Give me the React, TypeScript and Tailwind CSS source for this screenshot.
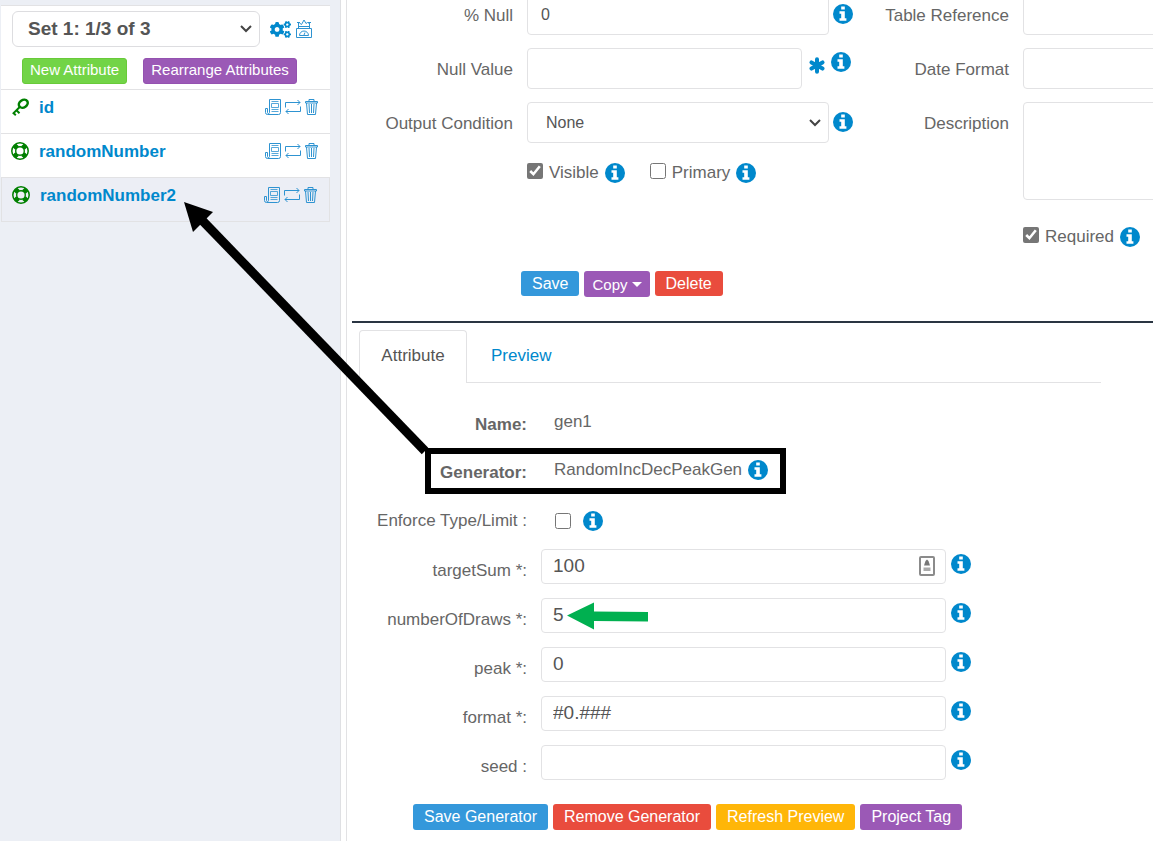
import type { ReactNode } from "react";
import { FaCogs } from "react-icons/fa";

function InfoButton() {
  return (
    <button type="button" aria-label="More information" className="block size-5 shrink-0">
      <svg viewBox="0 0 20 20" className="size-5">
        <circle cx="10" cy="10" r="10" fill="#0088cc" />
        <path d="M8.200 2.400h3.600v3H8.200zM6.500 7.200h5.300v7h1.600v2.500H6.500v-2.500h1.700V9.700H6.500z" fill="#fff" />
      </svg>
    </button>
  );
}

function AsteriskIcon() {
  return (
    <svg viewBox="0 0 16 17" className="mt-[5px] h-[17px] w-4 shrink-0" fill="none" stroke="#0088cc" strokeWidth="4" strokeLinecap="round">
      <path d="M8 2.200v12.600M2.500 5.400l11 6.200M2.500 11.600l11-6.200" />
    </svg>
  );
}

function KeyIcon() {
  return (
    <svg viewBox="0 0 18 18" className="size-[18px]" fill="none" stroke="#008000" strokeWidth="2">
      <ellipse cx="12.300" cy="5.700" rx="4.700" ry="3.700" transform="rotate(-35 12.300 5.700)" strokeWidth="2.500" />
      <path d="M9 8.700 1.800 15.900M5.200 12l3.300 3.300M2.200 14.800l2.600 2.400" />
    </svg>
  );
}

function RingIcon() {
  return (
    <svg viewBox="0 0 18 18" className="size-[18px]" fill="none" stroke="#008000">
      <circle cx="9" cy="9" r="8.200" strokeWidth="1.500" />
      <circle cx="9" cy="9" r="4.300" strokeWidth="1.400" />
      <path d="M3.200 3.200l2.900 2.900M14.800 3.200l-2.900 2.900M3.200 14.800l2.900-2.900M14.800 14.800l-2.900-2.900" strokeWidth="5" />
    </svg>
  );
}

function PaperIcon() {
  return (
    <svg viewBox="0 0 16 16" className="size-4" fill="none" stroke="#2e93d1">
      <path d="M4.500 13.500V.5h11v13a2 2 0 0 1-2 2h-11a2 2 0 0 1-2-2V9.500h2v4a1 1 0 0 0 2 0" />
      <path d="M6.500 4.500h7v4h-7zM6.500 2.500h7M6.500 10.500h7M6.500 12.500h7" strokeWidth=".8" />
    </svg>
  );
}

function RepeatIcon() {
  return (
    <svg viewBox="0 0 16 16" className="size-4" fill="none" stroke="#2e93d1">
      <path d="M.5 8.500v-5h14.500M12.500 1l2.500 2.500L12.500 6M15.500 7.500v5H1M3.500 10 1 12.500 3.500 15" />
    </svg>
  );
}

function BinIcon() {
  return (
    <svg viewBox="0 0 13 16" className="h-4 w-[13px]" fill="none" stroke="#2e93d1">
      <path d="M.5 2.500h12v1.500H.5zM4 2.500V.5h5v2M1.500 4l1 11.500h8l1-11.500M4 5l.5 9M6.500 5v9M9 5l-.5 9" />
    </svg>
  );
}

function ScaleIcon() {
  return (
    <svg viewBox="0 0 18 20" className="h-5 w-[18px]" fill="none" stroke="#2e93d1">
      <path d="M1.500 9.500h15v9h-15zM4.500 16.500a4.500 4.500 0 0 1 9 0zM9 16l1-2.500M3.500 9.500v-6M14.500 9.500v-6" />
      <path d="M3.500 7.500h11M2 3.500h3M13 3.500h3M4.500 4 6.500 5.500 9 1l2 3.500 1.500-1 1 1" />
    </svg>
  );
}

function Chevron() {
  return (
    <svg viewBox="0 0 12 8" className="pointer-events-none absolute right-2 top-1/2 h-2 w-3 -translate-y-1/2" fill="none" stroke="#444" strokeWidth="2">
      <path d="m1 1 5 5 5-5" />
    </svg>
  );
}

const field = "w-full rounded border border-[#e2e2e4] bg-white text-[#555] outline-none";

function AttributeRow({ name, icon, active }: { name: string; icon: ReactNode; active?: boolean }) {
  return (
    <li className={active ? "flex h-[45px] items-start border border-[#e2e2e4] bg-[#eceef5] pl-[10px] pr-3 pt-[7px]" : "flex h-11 items-start border-t border-[#e2e2e4] pl-[10px] pr-3 pt-[7px]"}>
      <span className="w-7 pt-[1px]">{icon}</span>
      <a href="#" className="flex-1 text-[17px] leading-[22px] font-bold text-[#0088cc]">{name}</a>
      <span className="flex items-center gap-1 pt-[2px]">
        <button type="button" aria-label={"Details of " + name}><PaperIcon /></button>
        <button type="button" aria-label={"Move " + name}><RepeatIcon /></button>
        <button type="button" aria-label={"Delete " + name}><BinIcon /></button>
      </span>
    </li>
  );
}

function Sidebar() {
  return (
    <aside className="w-[341px] shrink-0 border-r border-[#dfe0e3] bg-[#eceff5] pl-px pr-[10px] pt-[5px]">
      <div className="border-t border-[#e2e2e4] bg-white">
        <div className="flex items-center gap-[10px] pl-[11px] pr-[17px] pt-[5px]">
          <div className="relative flex-1">
            <select aria-label="Attribute set" className="h-9 w-full appearance-none rounded-md border border-[#dddde0] bg-white pl-[15px] text-[19px] font-bold text-[#555] outline-none">
              <option>Set 1: 1/3 of 3</option>
            </select>
            <Chevron />
          </div>
          <div className="flex items-center gap-1">
            <button type="button" aria-label="Settings" className="text-[#0088cc]"><FaCogs size={21} /></button>
            <button type="button" aria-label="Weights"><ScaleIcon /></button>
          </div>
        </div>
        <div className="flex gap-4 pb-[5px] pl-[21px] pt-[11px] text-[15px] leading-[22px] text-white">
          <button type="button" className="flex h-[26px] rounded-[3px] border border-[#68ca39] bg-[#72d447] px-[7px]">New Attribute</button>
          <button type="button" className="flex h-[26px] rounded-[3px] border border-[#9452b0] bg-[#9b59b6] px-[7px]">Rearrange Attributes</button>
        </div>
        <ul>
          <AttributeRow name="id" icon={<KeyIcon />} />
          <AttributeRow name="randomNumber" icon={<RingIcon />} />
          <AttributeRow name="randomNumber2" icon={<RingIcon />} active />
        </ul>
      </div>
    </aside>
  );
}

function Row({ id, label, children }: { id: string; label: string; children: ReactNode }) {
  return (
    <div className="flex items-start">
      <label htmlFor={id} className="w-[163px] shrink-0 pr-[14px] pt-3 text-right leading-5">{label}</label>
      {children}
    </div>
  );
}

function Check({ id, label, checked }: { id: string; label: string; checked?: boolean }) {
  return (
    <div className="flex items-start gap-[6px]">
      <input id={id} type="checkbox" defaultChecked={checked} className="size-4 accent-[#767676]" />
      <label htmlFor={id} className="leading-5">{label}</label>
      <InfoButton />
    </div>
  );
}

function Settings() {
  return (
    <section className="-mt-[6px]">
      <div className="flex">
        <div className="w-[506px] shrink-0 pl-[17px]">
          <div className="flex flex-col gap-[13px]">
            <Row id="null-pct" label="% Null">
              <input id="null-pct" defaultValue="0" className={field + " h-[41px] px-[13px] text-base"} />
              <span className="pl-1 pt-[10px]"><InfoButton /></span>
            </Row>
            <Row id="null-value" label="Null Value">
              <input id="null-value" className={field + " h-[41px] px-[13px] text-base"} />
              <span className="flex gap-[6px] pl-[7px] pr-[2px] pt-1">
                <AsteriskIcon />
                <InfoButton />
              </span>
            </Row>
            <Row id="condition" label="Output Condition">
              <div className="relative flex-1">
                <select id="condition" className={field + " h-[41px] appearance-none px-[18px] text-base"}>
                  <option>None</option>
                </select>
                <Chevron />
              </div>
              <span className="pl-1 pt-[10px]"><InfoButton /></span>
            </Row>
          </div>
          <div className="flex gap-[25px] pl-[163px] pt-5">
            <Check id="visible" label="Visible" checked />
            <Check id="primary" label="Primary" />
          </div>
        </div>
        <div className="flex flex-1 flex-col gap-[13px] overflow-hidden pl-[7px]">
          <Row id="table-ref" label="Table Reference">
            <input id="table-ref" className="-mr-2 h-[41px] min-w-0 flex-1 rounded border border-[#e2e2e4]" />
          </Row>
          <Row id="date-format" label="Date Format">
            <input id="date-format" className="-mr-2 h-[41px] min-w-0 flex-1 rounded border border-[#e2e2e4]" />
          </Row>
          <Row id="description" label="Description">
            <textarea id="description" className="-mr-2 h-[98px] min-w-0 flex-1 resize-none rounded border border-[#e2e2e4]" />
          </Row>
          <div className="pl-[163px] pt-[14px]">
            <Check id="required" label="Required" checked />
          </div>
        </div>
      </div>
      <div className="flex items-start gap-[5px] pl-[174px] pt-6 text-base leading-[25px] text-white">
        <button type="button" className="rounded-[3px] bg-[#3498db] px-[11px]">Save</button>
        <button type="button" className="flex h-[26px] items-center gap-1 rounded-[3px] bg-[#9b59b6] px-2 text-[15px]">
          Copy
          <svg viewBox="0 0 10 6" className="mt-[2px] h-[6px] w-[10px]" fill="#fff"><path d="M0 0h10L5 5z" /></svg>
        </button>
        <button type="button" className="rounded-[3px] bg-[#e94c3d] px-[11px]">Delete</button>
      </div>
    </section>
  );
}

function GeneratorRow({ id, label, value, badge }: { id: string; label: string; value: string; badge?: boolean }) {
  return (
    <div className="flex items-start">
      <label htmlFor={id} className="w-[180px] shrink-0 pt-3 text-right leading-5">{label}</label>
      <div className="relative ml-[14px] w-[405px]">
        <input id={id} defaultValue={value} className={field + " h-[35px] px-[11px] pb-[2px] text-[19px]"} />
        {badge && (
          <svg viewBox="0 0 16 20" className="absolute right-[11px] top-[7px] h-5 w-4" fill="none">
            <rect x="1" y="1" width="14" height="18" rx="1" stroke="#8b8b8b" strokeWidth="2" />
            <path d="M8 3.500 9.500 5l1.500 4.500H5L6.500 5z" fill="#777" />
            <path d="M4.500 11.500h7v3.500h-7z" fill="#aaa" />
          </svg>
        )}
      </div>
      <span className="pl-[5px] pt-[5px]"><InfoButton /></span>
    </div>
  );
}

function GeneratorPanel() {
  return (
    <section>
      <nav className="ml-3 mr-[52px] mt-[7px] flex border-b border-[#e2e2e4]">
        <a href="#" className="-mb-px h-[53px] w-[108px] rounded-t border border-b-0 border-[#e2e2e4] bg-white pt-[15px] text-center leading-5 text-[#555]">Attribute</a>
        <a href="#" className="pl-6 pt-4 leading-5 text-[#0088cc]">Preview</a>
      </nav>
      <dl className="pt-[29px] leading-5">
        <div className="flex h-12">
          <dt className="w-[180px] pt-[3px] text-right font-bold">Name:</dt>
          <dd className="pl-[27px]">gen1</dd>
        </div>
        <div className="flex h-12">
          <dt className="w-[180px] pt-[3px] text-right font-bold">Generator:</dt>
          <dd className="flex gap-[6px] pl-[27px]">RandomIncDecPeakGen <InfoButton /></dd>
        </div>
      </dl>
      <div className="flex h-[41px] pt-[3px]">
        <label htmlFor="enforce" className="w-[180px] text-right leading-5">Enforce Type/Limit :</label>
        <input id="enforce" type="checkbox" className="ml-7 mr-3 mt-[2px] size-4" />
        <InfoButton />
      </div>
      <div className="flex flex-col gap-[14px] text-[17px]">
        <GeneratorRow id="target-sum" label="targetSum *:" value="100" badge />
        <GeneratorRow id="draws" label="numberOfDraws *:" value="5" />
        <GeneratorRow id="peak" label="peak *:" value="0" />
        <GeneratorRow id="format" label="format *:" value="#0.###" />
        <GeneratorRow id="seed" label="seed :" value="" />
      </div>
      <div className="flex gap-[5px] pb-[11px] pl-[66px] pt-6 text-base leading-[26px] text-white">
        <button type="button" className="rounded-[3px] bg-[#3498db] px-[11px]">Save Generator</button>
        <button type="button" className="rounded-[3px] bg-[#e94c3d] px-[11px]">Remove Generator</button>
        <button type="button" className="rounded-[3px] bg-[#ffb608] px-[11px]">Refresh Preview</button>
        <button type="button" className="rounded-[3px] bg-[#9b59b6] px-[11px]">Project Tag</button>
      </div>
    </section>
  );
}

function Annotations() {
  return (
    <svg viewBox="0 0 800 700" className="pointer-events-none absolute left-0 top-0 h-[700px] w-[800px]" fill="none">
      <rect x="428" y="451" width="355" height="40" stroke="#000" strokeWidth="6" />
      <path d="M425 451 198 216" stroke="#000" strokeWidth="9" />
      <path d="m184 202 29 10-20 20z" fill="#000" />
      <path d="m567 615.500 27-13v9l54 .500v9.500l-54-.500v8.500z" fill="#00b050" />
    </svg>
  );
}

export default function App() {
  return (
    <div className="relative flex min-h-screen overflow-hidden bg-white font-['Liberation_Sans',Arial,sans-serif] text-[17px] text-[#666]">
      <Sidebar />
      <main className="ml-[5px] min-w-0 flex-1 border-l border-[#e2e2e4]">
        <Settings />
        <hr className="ml-[5px] mt-6 border-t-2 border-[#2a3542]" />
        <GeneratorPanel />
      </main>
      <Annotations />
    </div>
  );
}
